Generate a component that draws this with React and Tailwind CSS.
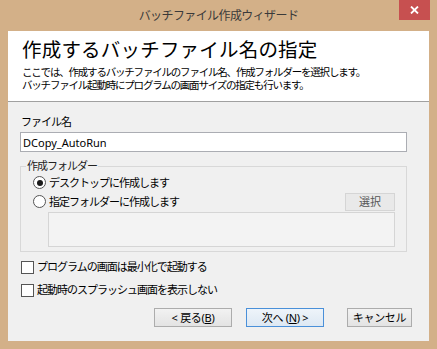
import React, { useState } from 'react';

const Radio = ({ checked }) => (
  <span className="w-[13px] h-[13px] rounded-full border border-[#555] bg-white flex items-center justify-center shrink-0">
    {checked && <span className="w-[6px] h-[6px] rounded-full bg-[#1a1a1a]" />}
  </span>
);

const Check = () => (
  <span className="w-[13px] h-[13px] border border-[#555] bg-white shrink-0" />
);

export default function App() {
  const [fileName, setFileName] = useState('DCopy_AutoRun');

  const label = "text-[11px] leading-[14px] tracking-[-1px]";
  const btn = "h-[19px] border text-[11px] leading-[17px] tracking-[-0.3px] text-center whitespace-pre";

  return (
    <div className="w-[437px] h-[349px] bg-[#d3b088] flex flex-col font-['Noto_Sans','Noto_Sans_CJK_JP',sans-serif] text-black">
      {/* title bar */}
      <div className="h-[31px] grid grid-cols-[1fr_auto_1fr] shrink-0">
        <div />
        <div className="text-[12px] tracking-[-0.6px] leading-[31px] text-[#3a3a3a]">バッチファイル作成ウィザード</div>
        <div className="flex justify-end items-start pr-[7px]">
          <div className="w-[31px] h-[20px] bg-[#c75050] flex items-center justify-center">
            <svg width="9" height="8" viewBox="0 0 9 8">
              <path d="M1 0.5 L8 7.5 M8 0.5 L1 7.5" stroke="#fff" strokeWidth="1.8" />
            </svg>
          </div>
        </div>
      </div>

      {/* client */}
      <div className="mx-[8px] h-[310px] bg-[#f0f0f0] flex flex-col">
        <div className="h-[71px] bg-white border-b border-[#a0a0a0] pl-[14px] pt-[7px] shrink-0">
          <div className="text-[19.5px] leading-[24px] tracking-[0.2px]">作成するバッチファイル名の指定</div>
          <div className="mt-[4px] text-[10.5px] leading-[13px] tracking-[-1.2px]">
            <div>ここでは、作成するバッチファイルのファイル名、作成フォルダーを選択します。</div>
            <div>バッチファイル起動時にプログラムの画面サイズの指定も行います。</div>
          </div>
        </div>

        <div className="px-[12px] flex flex-col">
          <div className={`${label} mt-[13px] ml-[1px]`}>ファイル名</div>
          <input
            className="mt-[3px] w-[387px] h-[20px] border border-[#abadb3] bg-white px-[2px] text-[11px] outline-none"
            value={fileName}
            onChange={e => setFileName(e.target.value)}
          />

          <fieldset className="mt-[7px] w-[387px] border border-[#d8d8d8] pb-[4px]">
            <legend className={`${label} ml-[5px] px-[1px] text-[#222]`}>作成フォルダー</legend>
            <div className="h-[19px] flex items-center pl-[12px] gap-[3px]">
              <Radio checked />
              <span className={label}>デスクトップに作成します</span>
            </div>
            <div className="h-[19px] flex items-center pl-[12px] pr-[11px] gap-[3px]">
              <Radio />
              <span className={label}>指定フォルダーに作成します</span>
              <div className="ml-auto w-[50px] h-[18px] bg-[#e9e9e9] border border-[#d5d5d5] text-[11px] leading-[16px] text-center text-[#555]">選択</div>
            </div>
            <div className="mt-[1px] ml-[27px] w-[347px] h-[35px] border border-[#d5d5d5] bg-[#f3f3f3]" />
          </fieldset>

          <div className="mt-[6px] h-[18px] flex items-center gap-[3px] ml-[1px]">
            <Check />
            <span className={label}>プログラムの画面は最小化で起動する</span>
          </div>
          <div className="mt-[5px] h-[18px] flex items-center gap-[3px] ml-[1px]">
            <Check />
            <span className={label}>起動時のスプラッシュ画面を表示しない</span>
          </div>

          <div className="mt-[9px] flex justify-end pr-[5px]">
            <button className={`${btn} w-[78px] border-[#acacac] bg-gradient-to-b from-[#f2f2f2] to-[#e3e3e3]`}>
              {'< 戻る('}<span className="underline">B</span>{')'}
            </button>
            <button className={`${btn} ml-[14px] w-[78px] border-[#4a90d9] bg-gradient-to-b from-[#eef4fa] to-[#dde8f3]`}>
              {'次へ ('}<span className="underline">N</span>{') >'}
            </button>
            <button className={`${btn} ml-[23px] w-[65px] border-[#acacac] bg-gradient-to-b from-[#f2f2f2] to-[#e3e3e3]`}>
              キャンセル
            </button>
          </div>
        </div>
      </div>
    </div>
  );
}
